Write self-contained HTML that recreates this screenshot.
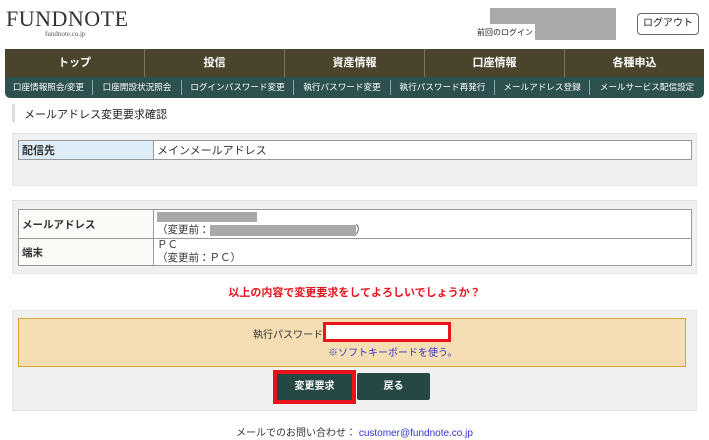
<!DOCTYPE html>
<html><head><meta charset="utf-8"><style>
*{box-sizing:border-box;margin:0;padding:0}
body{width:709px;height:440px;background:#fff;font-family:"Liberation Sans","Noto Sans CJK JP",sans-serif;position:relative;overflow:hidden;color:#333}
.a{position:absolute}
.nav1{left:5px;top:49px;width:699px;height:28px;background:#4a442c;display:flex}
.nav1 div{flex:1;color:#fff;font-weight:bold;font-size:11px;text-align:center;line-height:28px;border-right:1px solid #7a7458}
.nav1 div:last-child{border:none}
.nav2{left:5px;top:77px;width:699px;height:21px;background:#2d514e;border-radius:0 0 5px 5px;display:flex;color:#fff;font-size:8.6px;line-height:21px;white-space:nowrap}
.nav2 span{text-align:center;border-right:1px solid #8aa;height:15px;margin-top:3px;line-height:15px;overflow:hidden}
.nav2 span:last-child{border:none}
.box{background:#f0f0f0;border:1px solid #e3e3e3}
table{border-collapse:collapse;background:#fff;font-size:11px}
td{border:1px solid #999;padding:0 3px}
</style></head><body>
<div class="a" style="left:6px;top:6px;font-family:'Liberation Serif',serif;font-size:22px;letter-spacing:0.5px;color:#333">FUNDNOTE</div>
<div class="a" style="left:45px;top:30px;font-family:'Liberation Serif',serif;font-size:7px;color:#555">fundnote.co.jp</div>
<div class="a" style="left:490px;top:8px;width:126px;height:16px;background:#a9a9a9"></div>
<div class="a" style="left:477px;top:27px;font-size:8px;color:#222">前回のログイン</div>
<div class="a" style="left:535px;top:24px;width:81px;height:16px;background:#a9a9a9"></div>
<div class="a" style="left:637px;top:13px;width:62px;height:22px;border:1px solid #666;border-radius:4px;font-size:10px;text-align:center;line-height:20px;color:#222">ログアウト</div>
<div class="a nav1"><div>トップ</div><div>投信</div><div>資産情報</div><div>口座情報</div><div>各種申込</div></div>
<div class="a nav2"><span style="width:88px">口座情報照会/変更</span><span style="width:89px">口座開設状況照会</span><span style="width:112px">ログインパスワード変更</span><span style="width:97px">執行パスワード変更</span><span style="width:104px">執行パスワード再発行</span><span style="width:95px">メールアドレス登録</span><span style="width:114px">メールサービス配信設定</span></div>
<div class="a" style="left:12px;top:104px;width:3px;height:18px;background:#ddd"></div>
<div class="a" style="left:24px;top:106px;font-size:11px;color:#222">メールアドレス変更要求確認</div>
<div class="a box" style="left:12px;top:133px;width:685px;height:53px"></div>
<table class="a" style="left:18px;top:140px;width:674px;height:20px"><tr><td style="width:135px;background:#dcedf7;font-weight:bold">配信先</td><td>メインメールアドレス</td></tr></table>
<div class="a box" style="left:12px;top:200px;width:685px;height:74px"></div>
<table class="a" style="left:18px;top:209px;width:674px;height:56px;font-size:10.5px">
<tr style="height:29px"><td style="width:135px;background:#fbfaf7;font-weight:bold">メールアドレス</td><td style="line-height:14px"><div style="width:100px;height:10px;background:#a9a9a9;margin-top:1px;margin-bottom:1px"></div>（変更前：<span style="display:inline-block;width:146px;height:11px;background:#a9a9a9;vertical-align:middle"></span>）</td></tr>
<tr><td style="background:#fbfaf7;font-weight:bold">端末</td><td style="line-height:13px">ＰＣ<br>（変更前：ＰＣ）</td></tr></table>
<div class="a" style="left:0;width:709px;top:284px;text-align:center;color:#e8141c;font-weight:bold;font-size:11px">以上の内容で変更要求をしてよろしいでしょうか？</div>
<div class="a box" style="left:12px;top:310px;width:685px;height:101px"></div>
<div class="a" style="left:18px;top:318px;width:668px;height:49px;background:#f6deb4;border:1px solid #d4a830"></div>
<div class="a" style="left:253px;top:326px;font-size:10px">執行パスワード</div>
<div class="a" style="left:323px;top:322px;width:128px;height:20px;border:3px solid #e8141c;background:#fff"></div>
<div class="a" style="left:328px;top:344px;font-size:10px;color:#33c">※ソフトキーボードを使う。</div>
<div class="a" style="left:273px;top:370px;width:83px;height:34px;background:#e8141c"></div>
<div class="a" style="left:277px;top:374px;width:75px;height:26px;background:#264845;color:#fff;font-weight:bold;font-size:10px;text-align:center;line-height:26px">変更要求</div>
<div class="a" style="left:357px;top:373px;width:73px;height:27px;background:#264845;color:#fff;font-weight:bold;font-size:10px;text-align:center;line-height:27px;border-radius:2px">戻る</div>
<div class="a" style="left:0;width:709px;top:424px;text-align:center;font-size:10px;color:#333">メールでのお問い合わせ：&nbsp;<span style="color:#33c">customer@fundnote.co.jp</span></div>
</body></html>
